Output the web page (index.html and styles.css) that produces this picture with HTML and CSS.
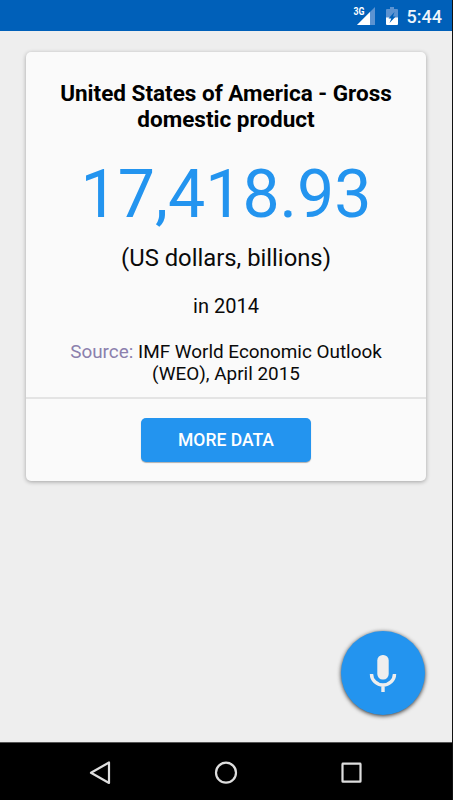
FILE: index.html
```html
<!DOCTYPE html>
<html lang="en">
<head>
<meta charset="utf-8">
<title>Gross domestic product</title>
<link rel="stylesheet" href="styles.css">
</head>
<body>
<div class="screen">
  <header class="status">
    <svg class="signal" width="24" height="20" viewBox="0 0 24 20">
      <path d="M22 1V19H4z" fill="#5c93d1"/>
      <path d="M17 6V19H4z" fill="#fff"/>
      <path d="M0 0H12.500V9.500H0z" fill="#0060b9"/>
      <text class="network" x="0.500" y="9" textLength="11" lengthAdjust="spacingAndGlyphs">3G</text>
    </svg>
    <svg class="battery" width="12" height="19" viewBox="0 0 12 19">
      <path d="M4 0h4v2h3q1 0 1 1v8H0V3q0-1 1-1h3z" fill="#5c93d1"/>
      <path d="M0 10.500h12V17q0 1-1 1H1q-1 0-1-1z" fill="#fff"/>
      <path d="M8.500 5L2.500 11.500H5.300L3.500 16L9.700 9.600H7z" fill="#0060b9"/>
    </svg>
    <span class="time">5:44</span>
  </header>
  <main class="content">
    <section class="card">
      <div class="facts">
        <h1 class="title">United States of America - Gross<br>domestic product</h1>
        <div class="value">17,418.93</div>
        <div class="unit">(US dollars, billions)</div>
        <div class="year">in 2014</div>
        <p class="source"><span class="label">Source:</span> IMF World Economic Outlook<br>(WEO), April 2015</p>
      </div>
      <div class="actions"><button class="more">MORE DATA</button></div>
    </section>
    <button class="mic" aria-label="Speak">
      <svg width="28" height="40" viewBox="0 0 28 40">
        <rect x="8.300" y="2" width="11.400" height="24.500" rx="5.400" fill="#eee"/>
        <path d="M2.500 21a11.500 11 0 0 0 23 0M14 32v7" fill="none" stroke="#eee" stroke-width="3.400"/>
      </svg>
    </button>
  </main>
  <nav class="navbar">
    <svg width="24" height="26" viewBox="0 0 24 26"><path d="M20 2.500V23L2 12.800z"/></svg>
    <svg width="24" height="26" viewBox="0 0 24 26"><circle cx="12" cy="12.700" r="10"/></svg>
    <svg width="24" height="26" viewBox="0 0 24 26"><rect x="3.500" y="3.700" width="18" height="18" rx=".5"/></svg>
  </nav>
</div>
</body>
</html>
```

FILE: styles.css
```css
* { box-sizing: border-box; }
body { margin: 0; background: #111; font-family: Roboto, sans-serif; color: #0a0a0a; }
.screen { width: 452px; height: 800px; display: flex; flex-direction: column; background: #eee; }
.status { height: 31px; flex: none; display: flex; align-items: flex-start; justify-content: flex-end; padding: 6px 10px 0 0; background: #0060b9; color: #eef5fb; }
.signal { margin-right: 9px; }
.battery { margin: 1px 9px 0 0; }
.network { font-size: 10.500px; font-weight: 700; fill: #fff; }
.time { font-size: 18px; line-height: 21px; font-weight: 500; }
.content { flex: 1; display: flex; flex-direction: column; justify-content: space-between; padding: 21px 26px 27px; }
.card { height: 429px; border-radius: 5px; background: #fafafa; box-shadow: 0 1px 4px rgba(0,0,0,.32); text-align: center; }
.facts { height: 347px; padding-top: 28px; border-bottom: 2px solid #e4e4e4; }
.title { margin: 0; font-size: 22.500px; line-height: 26px; font-weight: 700; color: #000; white-space: nowrap; }
.value { margin-top: 24px; font-size: 66.200px; line-height: 78px; color: #2394ef; }
.unit { margin-top: 10px; font-size: 23.800px; line-height: 28px; }
.year { margin-top: 22px; font-size: 20px; line-height: 24px; }
.source { margin: 23px 0 0; font-size: 18.900px; line-height: 22px; }
.label { color: #8b80ad; }
.actions { padding-top: 19px; }
.more { width: 170px; height: 44px; padding: 0; border: 0; border-radius: 5px; background: #2394ef; color: #fff; font: 500 17.500px Roboto, sans-serif; box-shadow: 0 1px 1px rgba(0,0,0,.3); }
.mic { align-self: flex-end; width: 84px; height: 84px; margin-right: 1px; padding: 0; border: 0; border-radius: 50%; background: #2394ef; box-shadow: 0 1px 4px rgba(0,0,0,.8); display: flex; align-items: center; justify-content: center; }
.navbar { height: 58px; flex: none; display: flex; justify-content: space-between; padding: 17px 89px 0; background: #000; border-top: 1px solid #555; }
.navbar svg { fill: none; stroke: #dedede; stroke-width: 2.200; stroke-linejoin: round; }
```
